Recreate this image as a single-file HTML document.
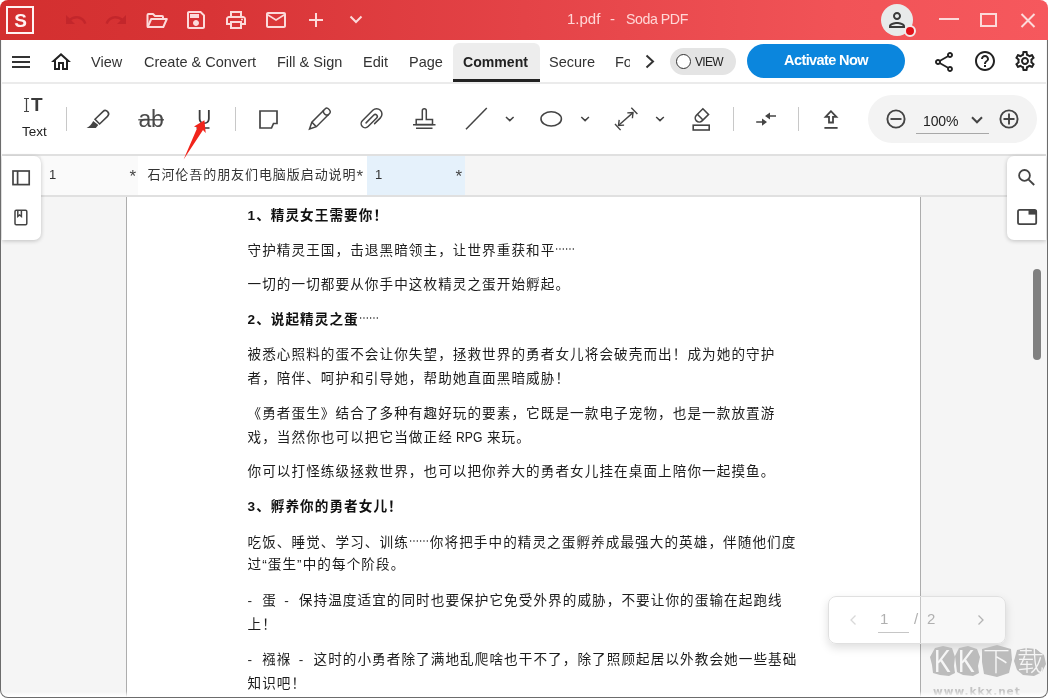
<!DOCTYPE html>
<html lang="zh">
<head>
<meta charset="utf-8">
<title>1.pdf - Soda PDF</title>
<style>
*{box-sizing:border-box;margin:0;padding:0}
html,body{width:1048px;height:698px;overflow:hidden;background:#fff}
body{font-family:"Liberation Sans","Noto Sans CJK SC",sans-serif;color:#222;position:relative}
.abs{position:absolute}
#win{will-change:transform;position:absolute;left:0;top:0;width:1048px;height:698px;border-radius:8px 8px 8px 8px;overflow:hidden;background:#f5f5f5}
#frame{position:absolute;left:0;top:40px;width:1048px;height:658px;border-radius:0 0 8px 8px;border:solid #6c6c6c;border-width:0 1px 1px 1px;pointer-events:none;z-index:50}
#botfade{position:absolute;left:1px;top:691px;width:1046px;height:6px;background:linear-gradient(180deg,rgba(255,255,255,0),#fff);z-index:40}
#title{position:absolute;left:0;top:0;width:1048px;height:40px;background:linear-gradient(90deg,#d32f2f 0%,#d83436 20%,#e44347 50%,#f15357 80%,#f6585d 100%)}
#title svg{position:absolute;overflow:visible}
#ttext{position:absolute;left:567px;top:10px;font-size:15px;line-height:18px;color:#ffd6d6;white-space:pre}
#menu{position:absolute;left:2px;top:40px;width:1044px;height:44px;background:#fff;border-bottom:2px solid #ebebeb}
#menu .mi{position:absolute;top:12.500px;font-size:14.500px;line-height:18px;color:#333;white-space:nowrap}
#menu svg{position:absolute;overflow:visible}
#tool{position:absolute;left:2px;top:84px;width:1044px;height:72px;background:#fff;border-bottom:2px solid #e0e0e0}
#tool svg{position:absolute;overflow:visible}
.sep{position:absolute;top:23px;width:1px;height:24px;background:#c8c8c8}
#tabs{position:absolute;left:2px;top:156px;width:1044px;height:41px;background:#f5f5f5;border-bottom:2px solid #e0e0e0}
.tab{position:absolute;top:0;height:39px;font-size:14px;line-height:39px;color:#333;white-space:nowrap}
#doc{position:absolute;left:2px;top:197px;width:1044px;height:500px;background:#f5f5f5}
#page{position:absolute;left:124px;top:0;width:795px;height:500px;background:#fff;border-left:1px solid #adadad;border-right:1px solid #adadad}
#page p{position:absolute;left:120.500px;width:600px;font-size:13.600px;letter-spacing:1.070px;line-height:24px;color:#1c1c1c;white-space:nowrap;font-family:"Liberation Sans","Noto Sans CJK SC",sans-serif}
#page p.b{font-weight:bold;color:#111}
.side{position:absolute;top:156px;width:39px;height:84px;background:#fff;box-shadow:0 1px 4px rgba(0,0,0,.22)}
.side svg{position:absolute;overflow:visible}
.wk{top:4px;font-size:32px;line-height:34px;color:#f6f6f6;transform:scaleX(.78);transform-origin:0 0;font-weight:normal}
.wc{top:5px;font-size:27px;line-height:30px;color:#f6f6f6;font-weight:300;font-family:"Noto Sans CJK SC",sans-serif}
.sp{font-family:"Noto Sans CJK SC",sans-serif;font-weight:normal;letter-spacing:0;font-size:14.670px;display:inline-block;width:21px;transform:scaleX(.68);transform-origin:0 50%;white-space:nowrap;color:#444}
.hy{letter-spacing:2.800px}
.ws{word-spacing:2.480px}
.lat{font-size:14.670px;letter-spacing:0;display:inline-block;width:24.600px;margin-left:-1.200px;margin-right:1px;transform:scaleX(.83);transform-origin:0 50%;white-space:nowrap}
</style>
</head>
<body>
<div id="win">
  <div id="title">
    <!-- logo -->
    <div class="abs" style="left:6px;top:6px;width:28px;height:28px;border:2px solid #fff3f3"></div>
    <div class="abs" style="left:6px;top:6px;width:28px;height:28px;text-align:center;padding-left:1px;font-weight:bold;font-size:19px;line-height:29.500px;color:#fff3f3">S</div>

    <!-- undo / redo (disabled) -->
    <svg style="left:64px;top:8px" width="24" height="24" viewBox="0 0 24 24"><path fill="#c3262b" d="M12.5 8c-2.65 0-5.05.99-6.9 2.6L2 7v9h9l-3.62-3.62c1.39-1.16 3.16-1.88 5.12-1.88 3.54 0 6.550 2.310 7.600 5.500l2.370-.780C21.080 11.030 17.150 8 12.500 8z"/></svg>
    <svg style="left:104px;top:8px" width="24" height="24" viewBox="0 0 24 24"><path fill="#c3262b" d="M18.400 10.600C16.550 8.990 14.150 8 11.500 8c-4.650 0-8.580 3.030-9.960 7.220L3.900 16c1.050-3.190 4.050-5.500 7.600-5.500 1.950 0 3.730.720 5.120 1.880L13 16h9V7l-3.600 3.600z"/></svg>
    <!-- folder open -->
    <svg style="left:145px;top:10px" width="24" height="20" viewBox="0 0 24 20" fill="none" stroke="#fcdada" stroke-width="2" stroke-linejoin="round" stroke-linecap="round"><path d="M2.500 16V5a1 1 0 0 1 1-1h4.500l2 2h7a1 1 0 0 1 1 1v2"/><path d="M2.700 17l3.500-8h15.600l-3.500 8z"/></svg>
    <!-- save -->
    <svg style="left:184px;top:8px" width="24" height="24" viewBox="0 0 24 24"><path fill="#fcdada" d="M17 3H5c-1.110 0-2 .900-2 2v14c0 1.100.890 2 2 2h14c1.100 0 2-.900 2-2V7l-4-4zm2 16H5V5h11.170L19 7.830V19zm-7-7c-1.660 0-3 1.340-3 3s1.340 3 3 3 3-1.340 3-3-1.340-3-3-3zM6 6h9v4H6z"/></svg>
    <!-- print -->
    <svg style="left:224px;top:8px" width="24" height="24" viewBox="0 0 24 24"><path fill="#fcdada" d="M19 8h-1V3H6v5H5c-1.660 0-3 1.340-3 3v6h4v4h12v-4h4v-6c0-1.660-1.340-3-3-3zM8 5h8v3H8V5zm8 12v2H8v-4h8v2zm2-2v-2H6v2H4v-4c0-.550.450-1 1-1h14c.550 0 1 .450 1 1v4h-2z"/><circle cx="18" cy="11.500" r="1" fill="#fcdada"/></svg>
    <!-- mail -->
    <svg style="left:264px;top:8px" width="24" height="24" viewBox="0 0 24 24"><path fill="#fcdada" d="M22 6c0-1.100-.900-2-2-2H4c-1.100 0-2 .900-2 2v12c0 1.100.900 2 2 2h16c1.100 0 2-.900 2-2V6zm-2 0l-8 5-8-5h16zm0 12H4V8l8 5 8-5v10z"/></svg>
    <!-- plus -->
    <svg style="left:308px;top:12px" width="16" height="16" viewBox="0 0 16 16" stroke="#fcdada" stroke-width="2" fill="none"><path d="M8 1v14M1 8h14"/></svg>
    <!-- chevron -->
    <svg style="left:349px;top:15px" width="14" height="10" viewBox="0 0 14 10" stroke="#fcdada" stroke-width="2" fill="none"><path d="M1.500 1.500l5.500 5.500 5.500-5.500"/></svg>
    <!-- avatar -->
    <div class="abs" style="left:881px;top:4px;width:32px;height:32px;border-radius:50%;background:#e8eaea"></div>
    <svg style="left:885px;top:8px" width="24" height="24" viewBox="0 0 24 24"><path fill="#3a3a3a" d="M12 6c1.100 0 2 .900 2 2s-.900 2-2 2-2-.900-2-2 .900-2 2-2m0 10c2.700 0 5.800 1.290 6 2H6c.230-.720 3.310-2 6-2m0-12C9.790 4 8 5.790 8 8s1.790 4 4 4 4-1.790 4-4-1.790-4-4-4zm0 10c-2.670 0-8 1.340-8 4v2h16v-2c0-2.660-5.330-4-8-4z"/></svg>
    <div class="abs" style="left:904px;top:25px;width:12px;height:12px;border-radius:50%;background:#e0121b;border:2px solid #f3eaea"></div>
    <!-- window controls -->
    <div class="abs" style="left:939px;top:18px;width:20px;height:2px;background:#fcdada"></div>
    <div class="abs" style="left:980px;top:13px;width:17px;height:14px;border:2px solid #fcdada"></div>
    <svg style="left:1020px;top:12px" width="16" height="16" viewBox="0 0 16 16" stroke="#fcdada" stroke-width="2" fill="none"><path d="M1.500 2l13 13M14.500 2l-13 13"/></svg>
    <div id="ttext">1.pdf<span class="abs" style="left:43px">-</span><span class="abs" style="left:59px;font-size:14.200px;letter-spacing:-0.450px">Soda PDF</span></div>
  </div>
  <div id="menu">
    <!-- hamburger -->
    <svg style="left:10px;top:16px" width="18" height="12" viewBox="0 0 18 12" fill="#333"><rect x="0" y="0" width="18" height="2"/><rect x="0" y="5" width="18" height="2"/><rect x="0" y="10" width="18" height="2"/></svg>
    <!-- home -->
    <svg style="left:47px;top:10px" width="24" height="24" viewBox="0 0 24 24"><path fill="#222" d="M12 5.690l5 4.500V18h-2v-6H9v6H7v-7.810l5-4.500M12 3L2 12h3v8h6v-6h2v6h6v-8h3L12 3z"/></svg>
    <span class="mi" style="left:89px">View</span>
    <span class="mi" style="left:142px">Create &amp; Convert</span>
    <span class="mi" style="left:275px">Fill &amp; Sign</span>
    <span class="mi" style="left:361px">Edit</span>
    <span class="mi" style="left:407px">Page</span>
    <div class="abs" style="left:451px;top:3px;width:87px;height:39px;background:#ededed;border-radius:6px 6px 0 0;border-bottom:3px solid #222"></div>
    <span class="mi" style="left:461px;font-weight:bold;color:#222;font-size:14.100px">Comment</span>
    <span class="mi" style="left:547px">Secure</span>
    <span class="mi" style="left:613px;width:15px;overflow:hidden">Fo</span>
    <svg style="left:643px;top:14px" width="10" height="15" viewBox="0 0 10 15" stroke="#333" stroke-width="2" fill="none"><path d="M1.500 1.500l6.500 6-6.500 6"/></svg>
    <!-- view toggle -->
    <div class="abs" style="left:668px;top:8px;width:66px;height:27px;border-radius:14px;background:#e4e4e4"></div>
    <div class="abs" style="left:674px;top:14px;width:15px;height:15px;border-radius:50%;background:#fff;border:1.500px solid #333"></div>
    <span class="mi" style="left:693px;top:14px;font-size:12px;letter-spacing:-0.700px;line-height:16px;color:#222">VIEW</span>
    <!-- activate -->
    <div class="abs" style="left:745px;top:4px;width:158px;height:34px;border-radius:17px;background:#0b86dd;color:#fff;font-weight:bold;font-size:14.500px;letter-spacing:-0.600px;line-height:33px;text-align:center">Activate Now</div>
    <!-- share -->
    <svg style="left:930px;top:10px" width="24" height="24" viewBox="0 0 24 24"><path fill="#222" d="M18 16.080c-.760 0-1.440.300-1.960.770L8.910 12.700c.050-.230.090-.460.090-.700s-.040-.470-.090-.700l7.050-4.110c.540.500 1.250.810 2.040.810 1.660 0 3-1.340 3-3s-1.340-3-3-3-3 1.340-3 3c0 .240.040.470.090.700L8.040 9.810C7.500 9.310 6.790 9 6 9c-1.660 0-3 1.340-3 3s1.340 3 3 3c.790 0 1.500-.310 2.040-.810l7.120 4.160c-.050.210-.080.430-.080.650 0 1.610 1.310 2.920 2.920 2.920s2.920-1.310 2.920-2.920c0-1.610-1.310-2.920-2.920-2.920zM18 4c.550 0 1 .450 1 1s-.450 1-1 1-1-.450-1-1 .450-1 1-1zM6 13c-.550 0-1-.450-1-1s.450-1 1-1 1 .450 1 1-.450 1-1 1zm12 7.020c-.550 0-1-.450-1-1s.450-1 1-1 1 .450 1 1-.450 1-1 1z"/></svg>
    <!-- help -->
    <svg style="left:971px;top:9px" width="24" height="24" viewBox="0 0 24 24"><path fill="#222" d="M11 18h2v-2h-2v2zm1-16C6.480 2 2 6.480 2 12s4.480 10 10 10 10-4.480 10-10S17.520 2 12 2zm0 18c-4.410 0-8-3.590-8-8s3.590-8 8-8 8 3.590 8 8-3.590 8-8 8zm0-14c-2.210 0-4 1.790-4 4h2c0-1.100.900-2 2-2s2 .900 2 2c0 2-3 1.750-3 5h2c0-2.250 3-2.500 3-5 0-2.210-1.790-4-4-4z"/></svg>
    <!-- settings -->
    <svg style="left:1011px;top:9px" width="24" height="24" viewBox="0 0 24 24"><path fill="#222" d="M19.430 12.980c.040-.320.070-.640.070-.980 0-.340-.030-.660-.070-.980l2.110-1.650c.190-.150.240-.420.120-.640l-2-3.460c-.090-.160-.260-.250-.440-.250-.060 0-.120.010-.170.030l-2.490 1c-.520-.400-1.080-.730-1.690-.980l-.380-2.650C14.460 2.180 14.250 2 14 2h-4c-.250 0-.460.180-.490.420l-.380 2.650c-.610.250-1.170.590-1.690.980l-2.490-1c-.060-.020-.120-.030-.180-.030-.170 0-.340.090-.430.250l-2 3.460c-.130.220-.070.490.120.640l2.110 1.650c-.040.320-.070.650-.070.980 0 .330.030.660.070.980l-2.110 1.650c-.190.150-.240.420-.120.640l2 3.460c.090.160.260.250.440.250.060 0 .120-.010.170-.030l2.490-1c.520.400 1.080.730 1.690.980l.380 2.650c.030.240.240.420.490.420h4c.250 0 .460-.180.490-.420l.380-2.650c.610-.250 1.170-.590 1.690-.980l2.490 1c.060.020.120.030.180.030.170 0 .340-.090.430-.250l2-3.460c.120-.220.070-.490-.120-.640l-2.110-1.650zm-1.980-1.710c.040.310.050.520.050.730 0 .210-.020.430-.050.730l-.140 1.130.890.700 1.080.840-.700 1.210-1.270-.510-1.040-.420-.900.680c-.430.320-.840.560-1.250.730l-1.060.430-.160 1.130-.200 1.350h-1.400l-.190-1.350-.160-1.130-1.060-.430c-.430-.180-.830-.410-1.230-.710l-.910-.700-1.060.430-1.270.510-.700-1.210 1.080-.840.890-.700-.140-1.130c-.030-.310-.050-.540-.050-.740s.020-.430.050-.730l.140-1.130-.890-.700-1.080-.840.700-1.210 1.270.510 1.040.420.900-.680c.430-.320.840-.560 1.250-.730l1.060-.430.160-1.130.200-1.350h1.390l.190 1.350.160 1.130 1.060.430c.430.180.830.410 1.230.710l.910.700 1.060-.430 1.270-.510.700 1.210-1.070.850-.890.700.140 1.130zM12 8c-2.210 0-4 1.790-4 4s1.790 4 4 4 4-1.790 4-4-1.790-4-4-4zm0 6c-1.100 0-2-.900-2-2s.900-2 2-2 2 .900 2 2-.900 2-2 2z"/></svg>
  </div>
  <div id="tool">
    <div class="sep" style="left:64px"></div>
    <div class="sep" style="left:233px"></div>
    <div class="sep" style="left:731px"></div>
    <div class="sep" style="left:796px"></div>
    <div class="abs" style="left:866px;top:11px;width:169px;height:48px;border-radius:24px;background:#f3f3f3"></div>
    <div class="abs" style="left:914px;top:49px;width:73px;height:1px;background:#a8a8a8"></div>
    <span class="abs" style="left:29px;top:11px;font-size:19px;line-height:20px;font-weight:bold;color:#3a3a3a">T</span>
    <span class="abs" style="left:20px;top:40px;font-size:13.500px;line-height:16px;color:#222">Text</span>
    <span class="abs" style="left:136.500px;top:22.5px;font-size:23px;line-height:24px;color:#4a4a4a;letter-spacing:-0.300px">ab</span>
    <span class="abs" style="left:194.800px;top:21px;font-size:20.400px;line-height:24px;color:#3c3c3c;transform:scaleX(.95);transform-origin:50% 50%">U</span>
    <span class="abs" style="left:921px;top:28px;font-size:14px;line-height:18px;color:#222;letter-spacing:-0.100px">100%</span>
  </div>
  <div id="tabs">
    <div class="tab" style="left:39px;width:97px;background:#fafafa"><span class="abs" style="left:8px;top:-1px;font-size:13px">1</span><span class="abs" style="left:88.500px;font-size:17px;top:0.500px;color:#444">*</span></div>
    <div class="tab" style="left:136px;width:229px;background:#fff"><span class="abs" style="left:9.500px;top:-1px;font-size:13px;letter-spacing:0.930px">石河伦吾的朋友们电脑版启动说明<span style="font-size:17px;line-height:10px;position:relative;top:2.500px;color:#444">*</span></span></div>
    <div class="tab" style="left:365px;width:98px;background:#e5f1fb"><span class="abs" style="left:8px;top:-1px;font-size:13px">1</span><span class="abs" style="left:88.500px;font-size:17px;top:0.500px;color:#444">*</span></div>
  </div>
  <div id="doc">
    <div id="page">
      <p class="b" style="top:7px">1、精灵女王需要你！</p>
      <p style="top:40px">守护精灵王国，击退黑暗领主，让世界重获和平<span class="sp">……</span></p>
      <p style="top:76px">一切的一切都要从你手中这枚精灵之蛋开始孵起。</p>
      <p class="b" style="top:109px">2、说起精灵之蛋<span class="sp">……</span></p>
      <p style="top:146px">被悉心照料的蛋不会让你失望，拯救世界的勇者女儿将会破壳而出！成为她的守护</p>
      <p style="top:170px">者，陪伴、呵护和引导她，帮助她直面黑暗威胁！</p>
      <p style="top:205px">《勇者蛋生》结合了多种有趣好玩的要素，它既是一款电子宠物，也是一款放置游</p>
      <p style="top:228px">戏，当然你也可以把它当做正经 <span class="lat">RPG</span> 来玩。</p>
      <p style="top:263px">你可以打怪练级拯救世界，也可以把你养大的勇者女儿挂在桌面上陪你一起摸鱼。</p>
      <p class="b" style="top:298px">3、孵养你的勇者女儿！</p>
      <p style="top:332px">吃饭、睡觉、学习、训练<span class="sp">……</span>你将把手中的精灵之蛋孵养成最强大的英雄，伴随他们度</p>
      <p style="top:356px">过“蛋生”中的每个阶段。</p>
      <p class="ws" style="top:392px"><span class="hy">-</span> 蛋 <span class="hy">-</span> 保持温度适宜的同时也要保护它免受外界的威胁，不要让你的蛋输在起跑线</p>
      <p style="top:416px">上！</p>
      <p class="ws" style="top:451px"><span class="hy">-</span> 襁褓 <span class="hy">-</span> 这时的小勇者除了满地乱爬啥也干不了，除了照顾起居以外教会她一些基础</p>
      <p style="top:475px">知识吧！</p>
    </div>
    <!-- scrollbar thumb -->
    <div class="abs" style="left:1031px;top:72px;width:8px;height:91px;border-radius:4px;background:#808080"></div>
    <!-- pager -->
    <div class="abs" id="pager" style="left:826px;top:399px;width:178px;height:48px;border-radius:8px;background:rgba(255,255,255,.3);border:1px solid #e0e0e0;box-shadow:0 4px 10px rgba(0,0,0,.13)">
      <span class="abs" style="left:51px;top:13px;font-size:15px;line-height:18px;color:#b0b0b0">1</span>
      <span class="abs" style="left:85px;top:13px;font-size:15px;line-height:18px;color:#b0b0b0">/</span>
      <span class="abs" style="left:98px;top:13px;font-size:15px;line-height:18px;color:#b0b0b0">2</span>
      <div class="abs" style="left:49px;top:35px;width:31px;height:1px;background:#c6c6c6"></div>
    </div>
  </div>
  <div class="side" style="left:2px;border-radius:0 7px 7px 0"></div>
  <div class="side" style="left:1007px;border-radius:7px 0 0 7px"></div>
</div>
<svg id="icons" class="abs" style="left:0;top:0;z-index:20;pointer-events:none" width="1048" height="698" viewBox="0 0 1048 698" fill="none" stroke="#444" stroke-width="1.500" stroke-linecap="butt" stroke-linejoin="miter">
  <!-- text cursor I-beam -->
  <path d="M24 98.500h5M24 111.500h5M26.500 98.500v13" stroke-width="1.200"/>
  <!-- highlighter -->
  <g transform="translate(97.300 121.600) rotate(-44)"><path d="M0 -3.300H11A3.300 3.300 0 0 1 11 3.300H0Z" stroke-width="1.600"/></g><path d="M93.200 121L98.300 125L95.800 127.900H86.600Q90.800 126 93.200 121Z" fill="#444" stroke="none"/>
  <!-- strikethrough line -->
  <path d="M138.300 119.800h25.700" stroke-width="1.300"/>
  <!-- underline of U -->
  <path d="M196.500 128h13" stroke-width="1.600"/>
  <!-- sticky note -->
  <path d="M260 111h17v12.500h-3.500l-2 4.500h-11.500z" stroke-width="1.700"/>
  <!-- pencil -->
  <g transform="translate(319.400 119.100) rotate(45)" stroke-width="1.500"><path d="M-3.200 -11.500a3.200 2.200 0 0 1 6.400 0v19l-3.200 6.500-3.200-6.500z"/><path d="M-3.200 -9.500a3.200 2.200 0 0 0 6.400 0M-3.200 7.500h6.400"/></g>
  <!-- paperclip -->
  <g transform="translate(371.900 118.800) rotate(-45)" stroke-width="1.500" stroke-linecap="round"><path d="M-1.500 5.350H6.650A5.350 5.350 0 0 0 6.650 -5.350H-8.150A4.050 4.050 0 0 0 -8.150 2.750H4A2 2 0 0 0 4 -1.250H-7"/></g>
  <!-- stamp -->
  <path d="M422.300 119.500v-8.700a2 2 0 0 1 4 0v8.700h6.200v5h-16.300v-5z" stroke-width="1.500"/>
  <path d="M413 124.800h22.500M416 128.200h16.500" stroke-width="1.400"/>
  <!-- line -->
  <path d="M466 129.200l20.800-21.200" stroke-width="1.500"/>
  <!-- chevrons -->
  <path d="M506 117l3.800 3.600 3.800-3.600M581.300 117l3.800 3.600 3.800-3.600M656.200 117l3.800 3.600 3.800-3.600" stroke-width="1.500"/>
  <!-- ellipse -->
  <ellipse cx="551.200" cy="118.900" rx="10.200" ry="7.100" stroke-width="1.600"/>
  <!-- measure -->
  <g stroke-width="1.400"><path d="M618.700 125.200l14.300-12.600"/><path d="M615 124l5.600 6.100M631.300 107.800l6.100 6.300"/><path d="M619.200 119.800l-0.700 5.600 5.600-0.300M627.300 112.900l5.700-0.300-0.600 5.600"/></g>
  <!-- eraser -->
  <rect x="693.200" y="125.200" width="16" height="4.800" stroke-width="1.600"/>
  <g transform="translate(701.300 116) rotate(45)" stroke-width="1.600"><path d="M-4 -6.200h8v9.100a4 4 0 0 1-8 0z"/><path d="M-4 1.600h8"/></g>
  <!-- compress arrows -->
  <path d="M776 116h-7M756.200 122.100h7" stroke-width="1.500"/>
  <path d="M765 116l5-3.600v7.200zM767 122.100l-5-3.600v7.200z" fill="#444" stroke="none"/>
  <!-- upload -->
  <path d="M831 111.200l-5.400 5.600h3.400v5.700h4v-5.700h3.400z" stroke-width="1.800"/>
  <path d="M824.400 127.900h13.200" stroke-width="1.800"/>
  <!-- zoom minus / plus -->
  <circle cx="896" cy="119" r="8.600" stroke-width="1.900"/><path d="M890.500 119h11" stroke-width="1.900"/>
  <circle cx="1009" cy="119" r="8.600" stroke-width="1.900"/><path d="M1003.500 119h11M1009 113.500v11" stroke-width="1.900"/>
  <path d="M972 117.300l5 5 5-5" stroke-width="2"/>
  <!-- side panel icons -->
  <g stroke-width="1.700"><rect x="13" y="171" width="16.200" height="13.600"/><path d="M17.600 171v13.600"/></g>
  <g stroke-width="1.500"><rect x="15" y="210.300" width="11.800" height="14.400" rx="1.200"/><path d="M17.800 210.300v6.200l1.800-1.500 1.800 1.500v-6.200"/></g>
  <circle cx="1024.500" cy="175.400" r="5.400" stroke-width="1.800"/><path d="M1028.400 179.400l5.800 5.600" stroke-width="1.900"/>
  <rect x="1018" y="209.900" width="18.200" height="14.200" rx="1.600" stroke-width="1.800"/><path d="M1028.500 210h7.800v4.600h-7.800z" fill="#444" stroke="none"/>
  <!-- pager arrows -->
  <path d="M855.500 615.500l-4.500 4.500 4.500 4.500" stroke="#d8d8d8" stroke-width="1.300"/>
  <path d="M978.500 615.500l4.500 4.500-4.500 4.500" stroke="#b4b4b4" stroke-width="1.300"/>
  <!-- red arrow -->
  <path d="M183.600 159.500L197.400 127.500L194 126.500L204.400 120.200L205.700 132.900L203 129.900z" fill="#f1241b" stroke="none"/>
</svg>
<div id="wm" class="abs" style="left:925px;top:640px;width:123px;height:58px;z-index:30;overflow:hidden">
  <svg class="abs" style="left:0;top:0" width="123" height="58" viewBox="0 0 123 58"><g fill="#bcbcbc"><path d="M10 8l8-2 9 2 3 9-1 9 1 7-6 3-9-1-7-2-1-8-2-8z"/><path d="M34 8l9-2 9 3 3 8-2 9 1 7-6 3-10-1-6-3-1-8-1-8z"/><path d="M57 9l15-4 14 4 1 11-3 13-12 4-13-3-2-12z"/><path d="M92 10l9-2 10 1 8 6 2 9-4 8-8 4-11-1-6-5-3-9z"/></g></svg>
  <span class="abs wk" style="left:9px">K</span>
  <span class="abs wk" style="left:33px">K</span>
  <span class="abs wc" style="left:58px">下</span>
  <span class="abs wc" style="left:92px">载</span>
  <span class="abs" style="left:8px;top:45px;font-family:'DejaVu Sans','Liberation Sans',sans-serif;font-size:10.500px;line-height:12px;color:#c4c4c4;font-weight:bold;letter-spacing:1px;white-space:nowrap">www.kkx.net</span>
</div>
<div id="botfade"></div>
<div id="frame"></div>
</body>
</html>
